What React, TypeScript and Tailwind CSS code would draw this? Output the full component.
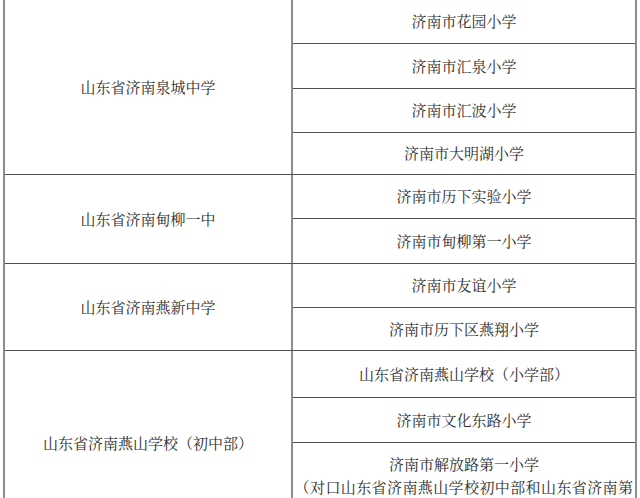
import React from "react";

type Row = { text: string; h: string; last?: boolean };
type Group = { name: string; rows: Row[] };

const groups: Group[] = [
  {
    name: "山东省济南泉城中学",
    rows: [
      { text: "济南市花园小学", h: "h-[44px]" },
      { text: "济南市汇泉小学", h: "h-[45px]" },
      { text: "济南市汇波小学", h: "h-[44px]" },
      { text: "济南市大明湖小学", h: "h-[41px]", last: true },
    ],
  },
  {
    name: "山东省济南甸柳一中",
    rows: [
      { text: "济南市历下实验小学", h: "h-[44px]" },
      { text: "济南市甸柳第一小学", h: "h-[44px]", last: true },
    ],
  },
  {
    name: "山东省济南燕新中学",
    rows: [
      { text: "济南市友谊小学", h: "h-[44px]" },
      { text: "济南市历下区燕翔小学", h: "h-[42px]", last: true },
    ],
  },
];

export default function App() {
  return (
    <div className="w-[640px] h-[498px] overflow-hidden bg-white text-[#2e2e2e] text-[15px] font-['Noto_Serif_CJK_SC','Noto_Sans_CJK_SC',serif]">
      <div className="ml-[3px] w-[634px] border-x-2 border-[#8e8e8e]">
        {groups.map((g) => (
          <div key={g.name} className="flex border-b border-[#505050]">
            <div className="w-[286px] flex items-center justify-center">{g.name}</div>
            <div className="w-[344px] border-l-2 border-[#8e8e8e]">
              {g.rows.map((r) => (
                <div
                  key={r.text}
                  className={`${r.h} flex items-center justify-center ${r.last ? "" : "border-b border-[#505050]"}`}
                >
                  {r.text}
                </div>
              ))}
            </div>
          </div>
        ))}
        <div className="flex border-b border-[#505050]">
          <div className="w-[286px] flex items-center justify-center">山东省济南燕山学校（初中部）</div>
          <div className="w-[344px] border-l-2 border-[#8e8e8e]">
            <div className="h-[47px] flex items-center justify-center border-b border-[#505050]">
              山东省济南燕山学校（小学部）
            </div>
            <div className="h-[45px] flex items-center justify-center border-b border-[#505050]">
              济南市文化东路小学
            </div>
            <div className="h-[92px] pt-[9px] text-center leading-[23px]">
              <div>济南市解放路第一小学</div>
              <div className="tracking-[0.4px]">（对口山东省济南燕山学校初中部和山东省济南第十二中学）</div>
            </div>
          </div>
        </div>
      </div>
    </div>
  );
}
